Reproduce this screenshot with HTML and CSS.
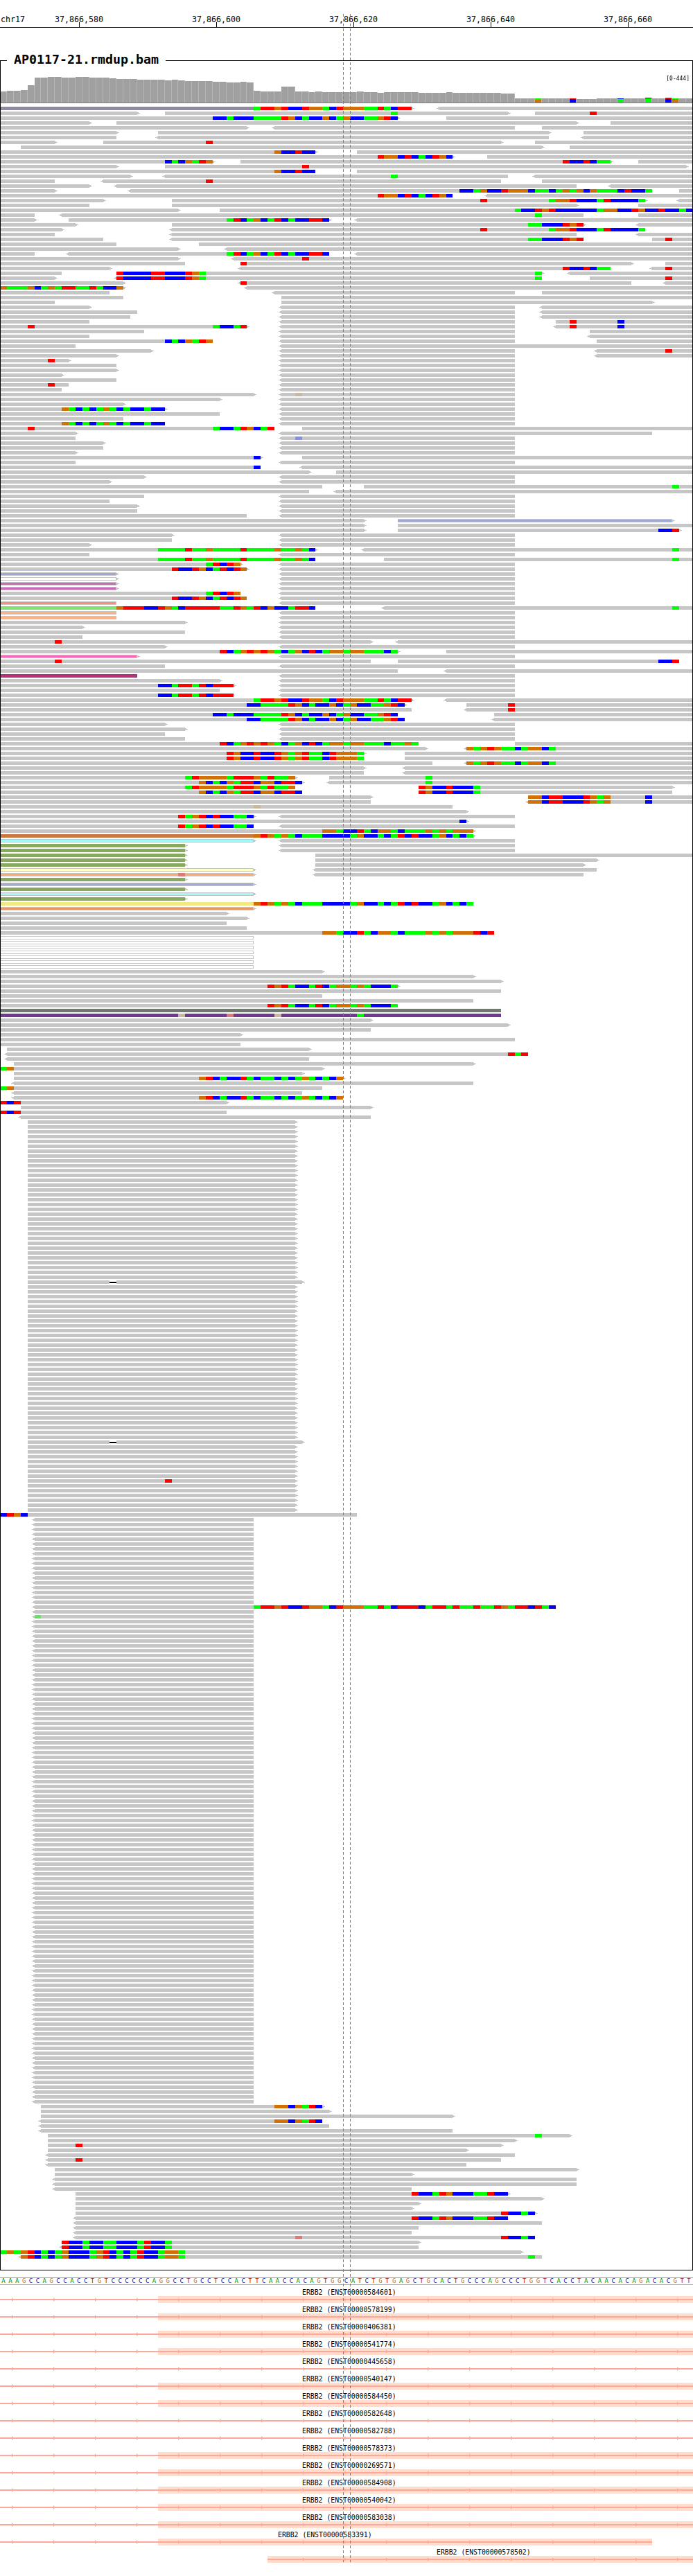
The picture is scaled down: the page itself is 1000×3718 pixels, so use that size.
FILE: index.html
```html
<!DOCTYPE html>
<html lang="en">
<head>
    <meta charset="UTF-8">
    <title>AP0117-21.rmdup.bam</title>
    <link rel="stylesheet" href="styles.css">
</head>
<body>
    <div class="page">
        <div class="ruler">
            <span class="chrom">chr17</span>
            <div class="tick" style="left: 114px"><span>37,866,580</span></div>
            <div class="tick" style="left: 312px"><span>37,866,600</span></div>
            <div class="tick" style="left: 510px"><span>37,866,620</span></div>
            <div class="tick" style="left: 708px"><span>37,866,640</span></div>
            <div class="tick" style="left: 906px"><span>37,866,660</span></div>
        </div>

        <div class="track">
            <h1 class="track-title">AP0117-21.rmdup.bam</h1>
            <span class="data-range">[0-444]</span>
            <canvas id="reads" width="998" height="3188"></canvas>
        </div>

        <div class="sequence" id="sequence"></div>
        <div class="genes" id="genes"></div>

        <div class="guide guide-left"></div>
        <div class="guide guide-right"></div>
    </div>

    <script src="script.js"></script>
</body>
</html>
```

FILE: styles.css
```css
:root {
    --mono: "DejaVu Sans Mono", "Liberation Mono", monospace;
    --gene-line: #ffa89a;
    --gene-exon: #ffdccc;
}

body {
    margin: 0;
    background: #fff;
    color: #000;
    font-family: var(--mono);
}

.page {
    position: relative;
    width: 1000px;
    height: 3718px;
    overflow: hidden;
}

.ruler {
    position: relative;
    height: 39px;
    border-bottom: 1px solid #000;
    font-size: 11.6px;
}

.chrom {
    position: absolute;
    left: 1px;
    top: 21px;
}

.tick {
    position: absolute;
    top: 32px;
    width: 1px;
    height: 7px;
    background: #000;
}

.tick span {
    position: absolute;
    top: -11px;
    left: 0;
    transform: translateX(-50%);
    white-space: nowrap;
}

.track {
    position: relative;
    margin-top: 47px;
    border: 1px solid #000;
    height: 3188px;
}

.track canvas {
    display: block;
}

.track-title {
    position: absolute;
    left: 9px;
    top: -14px;
    margin: 0;
    padding: 0 10px;
    background: #fff;
    font-size: 18.3px;
    font-weight: bold;
    line-height: 24px;
}

.data-range {
    position: absolute;
    right: 4px;
    top: 21px;
    font-size: 8px;
    line-height: 10px;
}

.sequence {
    display: grid;
    grid-template-columns: repeat(101, 9.9px);
    margin-top: 10px;
    height: 9px;
    border-top: 1px solid #a8a8a8;
    border-bottom: 1px solid #a8a8a8;
    font-size: 9px;
    line-height: 9px;
    text-align: center;
}

.base-A { color: #0a8a0a; }
.base-C { color: #2020a0; }
.base-G { color: #b07a30; }
.base-T { color: #a81818; }

.genes {
    margin-top: 6px;
}

.gene {
    height: 25px;
}

.gene-label {
    height: 10px;
    font-size: 9.8px;
    line-height: 10px;
    white-space: nowrap;
}

.gene svg {
    display: block;
}

.gene-exon { fill: var(--gene-exon); }
.gene-line { fill: var(--gene-line); }

.guide {
    position: absolute;
    top: 20px;
    width: 1px;
    height: 3678px;
    background: repeating-linear-gradient(to bottom, #808080 0, #808080 4px, transparent 4px, transparent 7px);
}

.guide-left { left: 495px; }
.guide-right { left: 505px; }
```

FILE: script.js
```js
const BASE_W = 9.9;
const ROW_TOP = 154;
const ROW_H = 5;
const ROW_STEP = 7;

const COLORS = {
    A: '#00ff00', C: '#0000ff', G: '#d17105', T: '#ff0000',
    a: '#68e068', c: '#8890d8', g: '#c8b8a0', t: '#dc7a7a'
};
const GREY = '#c6c6c6';

// read fills, edge = grey line above and below the fill
const FILLS = {
    mq: { color: '#908aa0' },
    olive: { color: '#88aa60' },
    sienna: { color: '#c87840' },
    yellow: { color: '#f0e880' },
    slate: { color: '#707870' },
    purple: { color: '#703a90' },
    lime: { color: '#80e070' },
    wine: { color: '#b83078' },
    lilac: { color: '#a0a8d8', edge: true },
    white: { color: '#ffffff', edge: true },
    orchid: { color: '#c86cb8', edge: true },
    salmon: { color: '#ff8c78', edge: true },
    peach: { color: '#ffb080', edge: true },
    pink: { color: '#f868b8', edge: true },
    cyan: { color: '#a0f8f8', edge: true },
    cream: { color: '#ffffc8', edge: true },
    orange: { color: '#ffa870', edge: true },
    tan: { color: '#e09868', edge: true }
};

// M is the pile of reads that all stop at the same place
const M = ', 41-75<';
// mismatch runs that show up on more than one row
const S0 = '37:ATTGTCCTGGACTGGGAATACTT';
const S2 = '31:CCACCCAAAATGCACCGCAGCCAAGTC';
const S9 = '40:GCCTCC';
const S10 = '55:TGGCTCACTGC';
const S19 = '70:T 80:AGGTCCCATCCCCA';
const S23 = '33:ATCAGCATCACCTTC';
const S24 = '77:AACCCTGT';
const S34 = '17:TCCCCTTCCCTGA 78:A';
const S62 = '9:GACACAGACACCACC';
const S48 = '24:CACGATG';
const S91 = '23:AAAATAAGAAAATAAAAGAAGAC';
const S94 = '30:ATCTG';
const S95 = '25:TCCTGCATCTG';
const S112 = '32:TCAGTGTGACAGCTCAGGAGGAAACA';
const S119 = '23:CCATTATCTTT';
const S123 = '36:CCAAAATGCACCGCAGCCAAGTC';
const S132 = '68:GAGTGAACAGGCA';
const S133 = '33:TGCCTCCTGAGTAACTGGGA';
const S138 = '27:ATGGGGATTTGATAAG';
const S139 = '29:GCACGATTCGGCTTC';
const S140 = '61:TGCCTCCCA';
const S142 = '77:GGCTTCCCTGAG 94:C';
const S146 = '26:TAGTCTCCAAC';
const S149 = '47:GGACCTACGGACAAAGAGAGGG';
const S150 = '37:GTGAGACAAACCCCAGCCACATCTCCAGCACA';
const S181 = '39:TGTACCATCAGGAGACCCA';
const S200 = '29:GTCACCTACAACACAGACACG';
const S412 = '40:GGCGATC';
const S430 = '60:TCCATGCCCAATCC';
const S440 = '9:TCCACCAACCCATCCA';
const S442 = '3:GTCACAGCCCAGTCACATCCAGGA';

const rows = [
    '0-60>@mq ' + S0 + ', 64-101<',
    '0-20>, 24-74> 57:A, 78-101 86:T',
    '0-58> ' + S2 + ', 65-101',
    '0-13>, 17-84>, 89-101',
    '0-36>, 40-75<, 79-101',
    '0-17>, 23-80>, 85-101',
    '0-17, 23-80<, 85-101<',
    '0-8>, 15-73> 30:T, 78-101',
    '3-79>, 83-101',
    '0-46> ' + S9 + ', 52-101',
    '0-66> ' + S10 + ', 71-101',
    '0-31> 24:CACGATG, 35-89> 82:TCCTCAA, 93-101',
    '0-17>, 24-100> 44:T',
    '0-46 ' + S9 + ', 52-101',
    '0-19>, 24-74< 57:A, 78-101<',
    '0-8, 15-73< 30:T, 79-101',
    '0-13>, 17-84<, 89-101<',
    '0-8>, 19-95< 67:CCAGCCTGGGCAACAGAGCGAAACTCCA, 99-101',
    '0-66 ' + S10 + ', 71-101<',
    '0-15>, 25-94> ' + S19 + ', 99-101<',
    '0-13, 25-84>, 93-101',
    // 21
    '0-26>, 32-101 75:ACCTGTCCCCCCAGGCCTGCCTCCAC',
    '0-5, 9-85< 78:A, 93-101',
    '0-5>, 10-48> ' + S23 + ', 52-101<',
    '0-11>, 25-85> ' + S24 + ', 93-101<',
    '0-9>, 25-94< ' + S19,
    '0-8, 25-84<, 93-101<',
    '0-15, 25-85< ' + S24 + ', 95-101 97:T',
    '0-17, 29-101',
    '0-26>, 33-101<',
    '0-5, 10-48< ' + S23 + ', 52-101<',
    '0-26>, 34-101< 44:T',
    '0-27, 35-92> 35:T, 97-101',
    '0-16>, 35-89< 82:TCCTCAA, 95-101< 97:T',
    '0-9, 17-79> ' + S34 + ', 83-101<',
    '0-8>, 17-79< ' + S34 + ', 86-101 97:T',
    '0-18>, 35-92< 35:T, 97-101<',
    '0-18> 0:GAAAGCAGATTAATACCG, 36-101<',
    '0-16, 40-75<, 79-101',
    '0-18, 41-101',
    '0-8, 41-95>',
    '0-13>' + M + ', 79-101<',
    '0-20' + M + ', 79-101<',
    '0-19' + M + ', 79-101<',
    '0-13' + M + ', 81-101 83:T 90:C',
    '0-36> 4:T 31:ACCAT' + M + ', 81-101< 83:T 90:C',
    '0-21' + M + ', 86-101',
    '0-13' + M + ', 86-101<',
    '0-31 ' + S48 + M + ', 87-101',
    '0-11, 41-101<',
    '0-22>' + M + ', 87-101< 97:T',
    '0-17>' + M + ', 87-101<',
    '0-10> 7:T' + M,
    '0-17' + M,
    '0-17>' + M,
    '0-9>' + M,
    '0-17' + M,
    '0-10 7:T' + M,
    '0-9' + M,
    '0-37>, 41-75< 43:g',
    '0-32>' + M,
    '0-18>' + M,
    '0-24> ' + S62 + M,
    '0-32' + M,
    '0-18' + M,
    '0-24 ' + S62 + M,
    '0-40 4:T 31:ACCATGCAT, 44-101',
    '0-11>, 41-95<',
    '0-11, 41-75< 43:c',
    '0-15>' + M,
    '0-15' + M,
    '0-11>' + M,
    '0-38> 37:C, 44-101',
    '0-11' + M,
    '0-38 37:C, 44-101<',
    '0-45>, 49-101',
    '0-21>' + M,
    '0-16>' + M,
    // 78
    '0-47, 53-101 98:A',
    '0-45, 49-101<',
    '0-21' + M,
    '0-16' + M,
    '0-20>' + M,
    '0-20' + M,
    '0-36' + M,
    '0-53>, 58-98>@lilac',
    '0-53>, 58-101',
    '0-53>, 58-99> 96:CCT',
    '0-25>' + M,
    '0-25' + M,
    '0-13>' + M,
    '0-46> ' + S91 + ', 53-101< 98:A',
    '0-13' + M,
    '0-46 ' + S91 + ', 56-101 98:A',
    '0-35> ' + S94 + M,
    '0-36> ' + S95 + M,
    '0-17>@lilac' + M,
    '0-17>@white' + M,
    '0-17>@orchid' + M,
    '0-17>@orchid' + M,
    '0-35 ' + S94 + M,
    '0-36 ' + S95 + M,
    '0-17@salmon' + M,
    '0-46@lime 17:GTTTCCTGACTTTTTAATGATCGCCATTC, 56-101< 98:A',
    '0-17@peach' + M,
    '0-17@peach' + M,
    '0-27>' + M,
    '0-12>' + M,
    '0-27' + M,
    '0-12' + M,
    '0-54> 8:T, 58-101<',
    '0-24>' + M,
    '0-58> ' + S112 + ', 65-101',
    '0-20>@pink' + M,
    '0-54 8:T, 58-99 96:CCT',
    '0-24' + M,
    '0-58, 65-101<',
    '0-20@wine' + M,
    '0-32>' + M,
    '0-34> ' + S119 + M,
    '0-32' + M,
    '0-34 ' + S119 + M,
    '0-60> ' + S0 + ', 65-101<',
    '0-59> ' + S123 + ', 68-101 74:T',
    '0-60, 68-101< 74:T',
    '0-58 ' + S2 + ', 72-101',
    '0-59 ' + S123 + ', 72-101<',
    '0-24>' + M,
    '0-27>' + M,
    '0-24' + M,
    '0-27' + M,
    '0-61 ' + S112 + 'AGA, 75-101',
    '0-62>, 68-101< ' + S132,
    '0-53> ' + S133 + ', 59-101',
    '0-53 ' + S133 + ', 59-101',
    // 135
    '0-63, 68-101< ' + S132,
    '0-53>, 59-101<',
    '0-53, 59-101<',
    '0-43> ' + S138 + ', 48-101 62:A',
    '0-44> ' + S139 + ', 48-101< 62:A',
    '0-43 ' + S138 + ', 61-98> ' + S140,
    '0-44 ' + S139 + ', 61-98 ' + S140,
    '0-54>, 77-101 ' + S142,
    '0-54, 77-101< ' + S142,
    '0-66 37:g',
    '0-68>',
    '0-37> ' + S146 + M,
    '0-68> 67:C',
    '0-37 ' + S146 + M,
    '0-69> ' + S149,
    '0-69>@sienna ' + S150,
    '0-37>@cyan' + M,
    '0-27>@olive' + M,
    '0-27>@olive' + M,
    '0-27>@olive, 46-101',
    '0-27>@olive, 46-87>',
    '0-27>@olive, 46-85>',
    '0-37>@cream, 46-87<',
    '0-37>@orange 26:t, 46-85<',
    '0-27>@olive',
    '0-37>@lilac',
    '0-27>@olive',
    '0-37>@cyan',
    '0-27>@olive',
    '0-69@yellow ' + S150,
    '0-37>@tan',
    '0-33>',
    '0-36>',
    '0-33',
    '0-36',
    '0-72 ' + S149 + 'TCT',
    '0-37@white', '0-37@white', '0-37@white', '0-37@white', '0-37@white', '0-37@white', '0-37@white',
    '0-47>',
    '0-69>',
    '0-73>',
    '0-58> ' + S181,
    '0-73',
    '0-47',
    '0-69',
    '0-58 ' + S181,
    '0-73@slate',
    '0-73@purple 26:g 33:t 40:g 52:A',
    '0-54>',
    '0-74>',
    '0-54',
    '0-35>',
    '0-75',
    '0-35',
    '1-45>',
    '1-77< 74:TAT',
    '1-45<',
    '2-69>',
    '0-47> 0:AG',
    '2-44>',
    '2-50> ' + S200,
    '2-69<',
    '0-47 0:AG',
    '2-44<',
    '2-50< ' + S200,
    '0-33> 0:TCT',
    '3-54>',
    '0-33 0:TCT',
    '3-54<'
];

// the two long stacks at the bottom of the pile
for (let i = 209; i <= 289; i++) rows[i] = '4-43>';
rows[242] = '4-44> 16:-';
rows[275] = '4-44> 16:-';
rows[283] = '4-43> 24:T';
rows[290] = '0-52 0:CTGC';
for (let i = 291; i <= 411; i++) rows[i] = '5-37<';
rows[309] = '5-81< 37:ATTGTCCTGGACTGGGAATACTTTCATTATAATAATGATTCTAC';
rows[311] = '5-37< 5:a';

rows.push(
    '6-47> ' + S412,
    '6-48>',
    '6-66>',
    '6-47< ' + S412,
    '6-48<',
    '6-66<',
    '7-83> 78:A',
    '7-75>',
    '7-73> 11:T',
    '7-68>',
    '7-75<',
    '7-73< 11:T',
    '7-68<',
    '8-84>',
    '8-60>',
    '8-84<',
    '8-84<',
    '8-60<',
    '11-74> ' + S430,
    '11-79>',
    '11-61>',
    '11-60>',
    '11-78> 73:TCCAC',
    '11-74< ' + S430,
    '11-79<',
    '11-61<',
    '11-60<',
    '11-78< 43:t 73:TCCAC',
    '9-61> ' + S440,
    '9-61< ' + S440,
    '0-76> 0:AGA ' + S442,
    '3-79< ' + S442 + ' 77:A'
);

const coverage = [
    132, 131, 131, 130, 123, 112, 112, 111, 111, 112, 112, 111, 111, 112, 112, 112, 113, 114, 114, 114,
    115, 115, 115, 115, 116, 115, 116, 117, 117, 117, 117, 118, 118, 119, 119, 118, 119, 131, 132, 132,
    132, 125, 125, 132, 132, 133, 132, 133, 133, 133, 133, 133, 132, 133, 133, 134, 133, 133, 133, 133,
    133, 134, 134, 134, 134, 133, 134, 134, 134, 134, 134, 134, 134, 135, 135, 142, 142, 142, 142, 142,
    142, 142, 142, 142, 143, 143, 143, 142, 142, 142, 142, 142, 142, 142, 141, 142, 142, 141, 142, 142, 142
];

// mismatch piles in the coverage track: base, then [color, height] from the top down
const coverageMarks = [
    [78, ['A', 2], ['G', 5]],
    [83, ['T', 1], ['C', 5]],
    [90, ['C', 1], ['A', 5]],
    [94, ['C', 1], ['A', 6]],
    [97, ['T', 2], ['C', 5]],
    [98, ['A', 1], ['G', 5]]
];

const px = k => Math.round(k * BASE_W);

function drawCoverage(ctx) {
    for (let k = 0; k < 101; k++) {
        const x = px(k);
        const w = px(k + 1) - x;
        ctx.fillStyle = '#b6b6b6';
        ctx.fillRect(x, coverage[k], w, 148 - coverage[k]);
        ctx.fillStyle = '#a0a0a0';
        ctx.fillRect(x, coverage[k], w - 1, 148 - coverage[k]);
    }
    coverageMarks.forEach(mark => {
        const k = mark[0];
        let y = coverage[k];
        mark.slice(1).forEach(part => {
            ctx.fillStyle = COLORS[part[0]];
            const h = part === mark[mark.length - 1] ? 148 - y : part[1];
            ctx.fillRect(px(k), y, px(k + 1) - px(k) - 1, h);
            y += h;
        });
    });
    ctx.fillStyle = '#808080';
    ctx.fillRect(0, 148, 1000, 1);
}

function drawRead(ctx, text, y) {
    const parts = text.trim().split(' ');
    const head = parts[0].match(/^(\d+)-(\d+)([<>]?)(?:@(\w+))?$/);
    const x1 = px(+head[1]);
    const x2 = px(+head[2]);
    const fill = FILLS[head[4]];

    ctx.fillStyle = GREY;
    ctx.fillRect(x1, y, x2 - x1, ROW_H);
    if (head[3] === '>') {
        ctx.fillRect(x2, y + 1, 2, 3);
        ctx.fillRect(x2 + 2, y + 2, 2, 1);
    } else if (head[3] === '<') {
        ctx.fillRect(x1 - 2, y + 1, 2, 3);
        ctx.fillRect(x1 - 4, y + 2, 2, 1);
    }

    if (fill) {
        ctx.fillStyle = fill.color;
        if (fill.edge) ctx.fillRect(x1, y + 1, x2 - x1 - 1, ROW_H - 2);
        else ctx.fillRect(x1, y, x2 - x1, ROW_H);
    }

    parts.slice(1).forEach(part => {
        const bits = part.split(':');
        const start = +bits[0];
        for (let i = 0; i < bits[1].length; i++) {
            const ch = bits[1][i];
            const a = px(start + i);
            const b = px(start + i + 1);
            if (ch === '-') {
                ctx.fillStyle = '#fff';
                ctx.fillRect(a, y, b - a, ROW_H);
                ctx.fillStyle = '#000';
                ctx.fillRect(a, y + 2, b - a, 2);
            } else {
                ctx.fillStyle = COLORS[ch];
                ctx.fillRect(a, y, b - a, ROW_H);
            }
        }
    });
}

function drawTrack() {
    const ctx = document.getElementById('reads').getContext('2d');
    // canvas starts inside the box border, draw in page coordinates
    ctx.translate(-1, -88);
    drawCoverage(ctx);
    rows.forEach((row, i) => {
        row.split(', ').forEach(read => drawRead(ctx, read, ROW_TOP + i * ROW_STEP));
    });
}

function buildSequence() {
    const seq = 'AAAGCCAGCCACCTGTCCCCCCAGGCCTGCCTCCACTTCAACCACAGTGG' +
        'CATCTGTGAGCTGCACTGCCCAGCCCTGGTCACCTACAACACAGACACGTT';
    const box = document.getElementById('sequence');
    seq.split('').forEach(b => {
        const span = document.createElement('span');
        span.className = 'base-' + b;
        span.textContent = b;
        box.appendChild(span);
    });
}

const genes = [
    { id: '584601', exon: [228, 1000] },
    { id: '578199', exon: [228, 1000] },
    { id: '406381', exon: [228, 1000] },
    { id: '541774', exon: [228, 1000] },
    { id: '445658' },
    { id: '540147', exon: [228, 1000] },
    { id: '584450', exon: [228, 1000] },
    { id: '582648' },
    { id: '582788' },
    { id: '578373', exon: [228, 1000] },
    { id: '269571', exon: [228, 1000] },
    { id: '584908', exon: [228, 1000] },
    { id: '540042', exon: [228, 1000] },
    { id: '583038', exon: [228, 1000] },
    { id: '583391', exon: [228, 941], end: 941, label: 401 },
    { id: '578502', exon: [386, 1000], start: 386, label: 630 }
];

function buildGenes() {
    const box = document.getElementById('genes');
    genes.forEach(g => {
        const start = g.start || 0;
        const end = g.end || 1000;
        let shapes = '';
        if (g.exon) {
            shapes += `<rect class="gene-exon" x="${g.exon[0]}" y="0" width="${g.exon[1] - g.exon[0]}" height="10"/>`;
        }
        shapes += `<rect class="gene-line" x="${start}" y="4" width="${end - start}" height="2"/>`;
        for (let x = 17; x < end; x += 60) {
            if (x > start) shapes += `<polygon class="gene-line" points="${x},2 ${x + 3},5 ${x},8"/>`;
        }

        const row = document.createElement('div');
        row.className = 'gene';
        row.innerHTML = `<div class="gene-label" style="padding-left: ${g.label || 436}px">ERBB2 (ENST00000${g.id})</div>` +
            `<svg width="1000" height="10">${shapes}</svg>`;
        box.appendChild(row);
    });
}

drawTrack();
buildSequence();
buildGenes();
```
